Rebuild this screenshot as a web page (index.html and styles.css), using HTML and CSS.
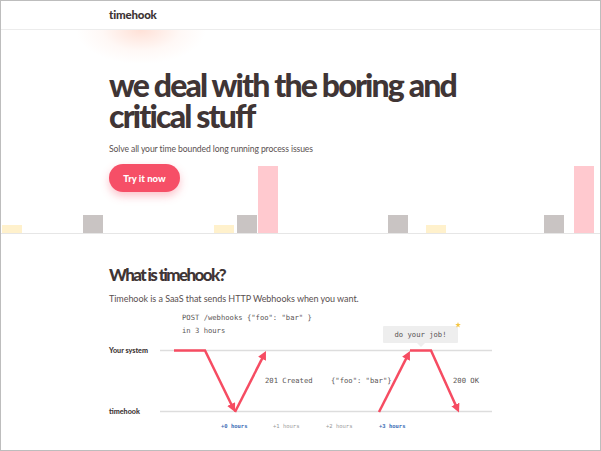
FILE: index.html
```html
<!DOCTYPE html>
<html lang="en">
<head>
<meta charset="utf-8">
<title>timehook</title>
<link rel="stylesheet" href="styles.css">
</head>
<body>
<div class="frame">
  <header class="topbar"><span class="logo">timehook</span></header>
  <section class="hero">
    <div class="hero-text">
      <h1>we deal with the boring and<br>critical stuff</h1>
      <p class="lead">Solve all your time bounded long running process issues</p>
      <a class="cta" href="#">Try it now</a>
    </div>
    <div class="chart">
      <span class="bar bar-yellow" style="left:1px;height:8px"></span>
      <span class="bar bar-gray" style="left:82px;height:18px"></span>
      <span class="bar bar-yellow" style="left:213px;height:8px"></span>
      <span class="bar bar-gray" style="left:236px;height:18px"></span>
      <span class="bar bar-pink" style="left:257px;height:67px"></span>
      <span class="bar bar-gray" style="left:387px;height:18px"></span>
      <span class="bar bar-yellow" style="left:425px;height:8px"></span>
      <span class="bar bar-gray" style="left:543px;height:18px"></span>
      <span class="bar bar-pink" style="left:573px;height:67px"></span>
    </div>
  </section>
  <section class="about">
    <h2>What is timehook?</h2>
    <p class="intro">Timehook is a SaaS that sends HTTP Webhooks when you want.</p>
    <svg class="diagram" width="392" height="130" viewBox="109 305 392 130" xmlns="http://www.w3.org/2000/svg">
      <defs>
        <marker id="ah" viewBox="0 0 10 10" refX="5" refY="5" markerWidth="3.5" markerHeight="3.5" orient="auto">
          <path d="M0,0 L10,5 L0,10 z" class="arrow-head"/>
        </marker>
      </defs>
      <text class="code" x="182" y="319">POST /webhooks {"foo": "bar" }</text>
      <text class="code" x="182" y="332">in 3 hours</text>

      <text class="lane" x="109" y="352">Your system</text>
      <text class="lane" x="109" y="413">timehook</text>
      <line class="track" x1="160" y1="349.5" x2="492" y2="349.5"/>
      <line class="track" x1="160" y1="410.5" x2="492" y2="410.5"/>

      <rect class="bubble" x="383" y="325" width="75" height="17" rx="1"/>
      <polygon class="bubble" points="417,342 425,342 421,346"/>
      <text class="code" x="420.5" y="335.5" text-anchor="middle">do your job!</text>
      <polygon class="star" points="458,321 458.71,323.03 460.85,323.07 459.14,324.37 459.76,326.43 458,325.2 456.24,326.43 456.86,324.37 455.15,323.07 457.29,323.03"/>

      <polyline class="flow" points="174,349.5 205,349.5 233.1,407" marker-end="url(#ah)"/>
      <polyline class="flow" points="235,411 264,353.9" marker-end="url(#ah)"/>
      <polyline class="flow" points="379,411 408,353.9" marker-end="url(#ah)"/>
      <polyline class="flow" points="410,349.5 431,349.5 457.2,407.5" marker-end="url(#ah)"/>

      <text class="code" x="265" y="382">201 Created</text>
      <text class="code" x="331" y="382">{"foo": "bar"}</text>
      <text class="code" x="453" y="382">200 OK</text>

      <text class="tick tick-on" x="221" y="427">+0 hours</text>
      <text class="tick" x="273" y="427">+1 hours</text>
      <text class="tick" x="326" y="427">+2 hours</text>
      <text class="tick tick-on" x="379" y="427">+3 hours</text>
    </svg>
  </section>
</div>
</body>
</html>
```

FILE: styles.css
```css
* { box-sizing: border-box; }
html, body { margin: 0; padding: 0; background: #fff; }
body { font-family: Lato, "Noto Sans", sans-serif; color: #403535; }

.frame {
  width: 601px;
  height: 451px;
  border: 1px solid #bdbdbd;
  overflow: hidden;
  background: #fff;
}

.topbar {
  height: 29px;
  border-bottom: 1px solid #ececec;
  padding: 0 0 2px 108px;
  display: flex;
  align-items: center;
}
.logo {
  font-weight: 900;
  font-size: 11.5px;
  letter-spacing: -0.2px;
  color: #403535;
}

.hero {
  display: grid;
  height: 204px;
  border-bottom: 1px solid #e6e6e6;
  background: radial-gradient(ellipse 65px 34px at 140px 0px, rgba(255, 176, 150, 0.38), rgba(255, 200, 180, 0.12) 60%, rgba(255, 255, 255, 0) 100%);
}
.hero-text, .chart { grid-area: 1 / 1; }

.hero-text {
  padding: 39px 0 0 108px;
  position: relative;
  z-index: 1;
  display: flex;
  flex-direction: column;
  align-items: flex-start;
}
h1 {
  margin: 0;
  font-size: 32px;
  line-height: 31px;
  font-weight: 900;
  letter-spacing: -1.85px;
  color: #403535;
}
.lead {
  margin: 12px 0 0;
  font-size: 8.6px;
  line-height: 12px;
  letter-spacing: -0.1px;
  color: #5a5050;
}
.cta {
  margin-top: 9px;
  width: 71px;
  height: 28px;
  border-radius: 14px;
  background: #f64f67;
  color: #fff;
  font-size: 9.5px;
  font-weight: 900;
  text-decoration: none;
  display: flex;
  align-items: center;
  justify-content: center;
  box-shadow: 0 4px 8px rgba(246, 79, 103, 0.35);
}

.chart {
  align-self: end;
  height: 67px;
  position: relative;
}
.bar {
  position: absolute;
  bottom: 0;
  width: 20px;
}
.bar-yellow { background: #fff1cc; }
.bar-gray { background: #c9c4c3; }
.bar-pink { background: #ffc9cf; }

.about {
  padding: 31px 0 0 108px;
}
h2 {
  margin: 0;
  font-size: 17px;
  line-height: 20px;
  font-weight: 900;
  letter-spacing: -1.6px;
  color: #403535;
}
.intro {
  margin: 7px 0 0;
  font-size: 9px;
  line-height: 13px;
  letter-spacing: -0.05px;
  color: #5a5050;
}
.diagram {
  display: block;
  margin-top: 1px;
  overflow: visible;
}
.code {
  font-family: "DejaVu Sans Mono", "Liberation Mono", monospace;
  font-size: 7.2px;
  fill: #5a5555;
}
.lane {
  font-family: Lato, sans-serif;
  font-weight: 900;
  font-size: 7.2px;
  fill: #403535;
}
.track { stroke: #dddddd; stroke-width: 1.5; }
.bubble { fill: #eeeeee; }
.star { fill: #f5c542; }
.flow {
  fill: none;
  stroke: #f64c62;
  stroke-width: 2.5;
  stroke-linejoin: miter;
}
.arrow-head { fill: #f64c62; }
.tick {
  font-family: "DejaVu Sans Mono", monospace;
  font-size: 5.5px;
  fill: #9a9a9a;
}
.tick-on { fill: #3b6cb5; font-weight: bold; }
```
